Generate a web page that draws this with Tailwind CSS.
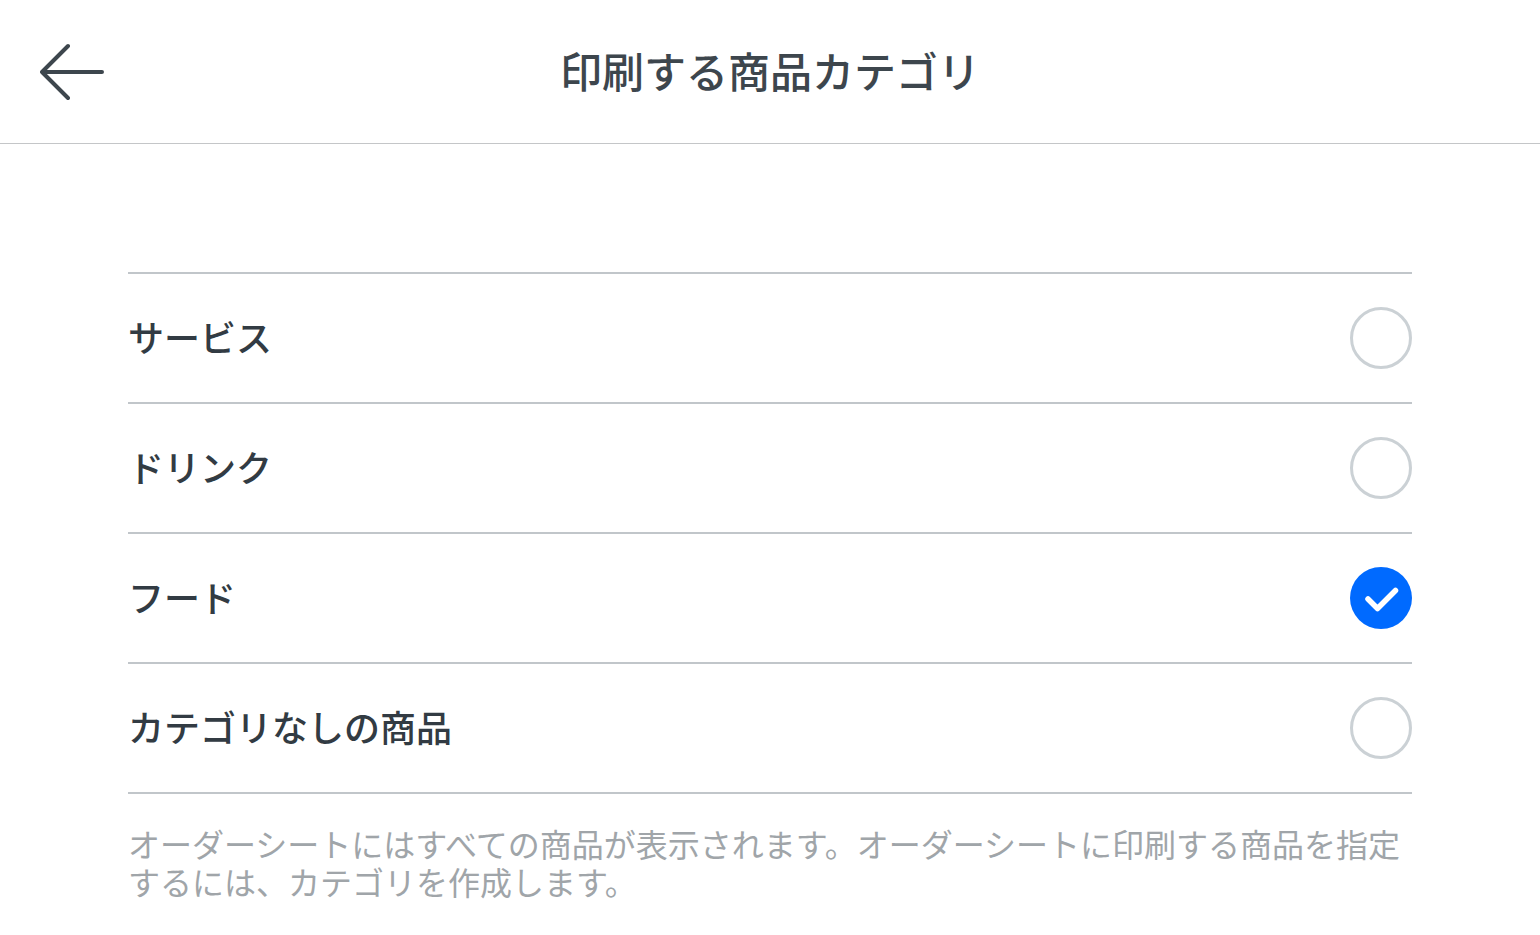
<!DOCTYPE html>
<html lang="ja">
<head>
    <meta charset="UTF-8">
    <meta name="viewport" content="width=device-width, initial-scale=1.0">
    <title>印刷する商品カテゴリ</title>
    <script src="https://cdn.jsdelivr.net/npm/@tailwindcss/browser@4"></script>
</head>
<body class="bg-white text-[#323b43] font-['Noto_Sans_CJK_JP',sans-serif]">
    <header class="grid grid-cols-[64px_1fr_64px] items-center h-36 px-10 border-b border-[#c4c6c8]">
        <button type="button" aria-label="戻る">
            <svg class="w-16 h-16" viewBox="0 0 64 64" fill="none" stroke="#3d464d" stroke-width="4" stroke-linejoin="round" stroke-linecap="round">
                <path d="M62 32H2M28 6L2 32L28 58"/>
            </svg>
        </button>
        <h1 class="pb-1 text-[42px] leading-[60px] font-medium text-center text-[#3d464d]">印刷する商品カテゴリ</h1>
    </header>

    <main class="px-32 pt-32 pb-8">
        <form>
            <ul class="border-t-2 border-[#c1c6ca]">
                <li class="border-b-2 border-[#c1c6ca]">
                    <label class="flex items-center justify-between h-32">
                        <span class="pb-1 text-[36px] leading-[52px] font-medium">サービス</span>
                        <input type="checkbox" name="category" class="appearance-none size-[62px] rounded-full border-3 border-[#cbd1d5]">
                    </label>
                </li>
                <li class="border-b-2 border-[#c1c6ca]">
                    <label class="flex items-center justify-between h-32">
                        <span class="pb-1 text-[36px] leading-[52px] font-medium">ドリンク</span>
                        <input type="checkbox" name="category" class="appearance-none size-[62px] rounded-full border-3 border-[#cbd1d5]">
                    </label>
                </li>
                <li class="border-b-2 border-[#c1c6ca]">
                    <label class="flex items-center justify-between h-32">
                        <span class="pb-1 text-[36px] leading-[52px] font-medium">フード</span>
                        <span class="grid">
                            <input type="checkbox" name="category" checked class="col-start-1 row-start-1 appearance-none size-[62px] rounded-full bg-[#006aff]">
                            <svg class="col-start-1 row-start-1 size-[62px] pointer-events-none" viewBox="0 0 62 62" fill="none" stroke="#fff" stroke-width="5.5" stroke-linecap="round" stroke-linejoin="round">
                                <path d="M18 32L27.5 41.5L45.5 23.5"/>
                            </svg>
                        </span>
                    </label>
                </li>
                <li class="border-b-2 border-[#c1c6ca]">
                    <label class="flex items-center justify-between h-32">
                        <span class="pb-1 text-[36px] leading-[52px] font-medium">カテゴリなしの商品</span>
                        <input type="checkbox" name="category" class="appearance-none size-[62px] rounded-full border-3 border-[#cbd1d5]">
                    </label>
                </li>
            </ul>
        </form>
        <p class="pt-[30px] text-[32px] leading-[38px] font-normal text-[#a0a5a9]">オーダーシートにはすべての商品が表示されます。オーダーシートに印刷する商品を指定するには、カテゴリを作成します。</p>
    </main>
</body>
</html>
